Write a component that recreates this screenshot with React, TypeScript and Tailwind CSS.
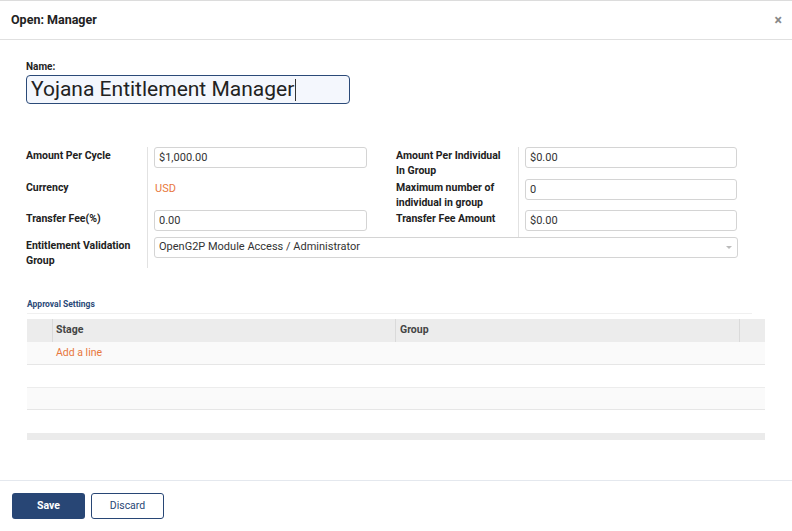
const font = { fontFamily: "Roboto, 'Liberation Sans', sans-serif" };

function TextBox({ value }: { value: string }) {
  return (
    <div className="h-[21px] w-full rounded-[3px] border border-[#d4d4d4] bg-white px-[4px] text-[11px] leading-[19px] text-[#333]">
      {value}
    </div>
  );
}

function Label({ children }: { children: React.ReactNode }) {
  return (
    <div className="pt-[1px] text-[10.5px] font-bold leading-[15px] text-[#222]">
      {children}
    </div>
  );
}

export default function App() {
  return (
    <div
      className="flex h-[531px] w-[792px] flex-col border-t border-[#dcdcdc] bg-white"
      style={font}
    >
      <div className="flex h-[39px] items-center justify-between border-b border-[#e0e0e0] pl-[11px] pr-[10px]">
        <span className="text-[12.5px] font-bold text-[#222]">Open: Manager</span>
        <span className="text-[14px] font-bold leading-none text-[#888]">×</span>
      </div>

      <div className="flex-1 px-[26px]">
        <div className="mt-[19px] text-[10px] font-bold text-[#222]">Name:</div>
        <div className="mt-[1px] flex h-[29px] w-[324px] items-center rounded-[4px] border border-[#2b4a78] bg-[#f4f7fd] pl-[4px] text-[21px] leading-none text-[#222]">
          Yojana Entitlement Manager
          <span className="ml-[1px] h-[22px] w-[1px] bg-[#333]" />
        </div>

        <div className="mt-[43px] grid grid-cols-[121px_220px_29px_122px_219px]">
          {/* row 1 */}
          <div className="h-[32px]">
            <Label>Amount Per Cycle</Label>
          </div>
          <div className="border-l border-[#e2e2e2] pl-[6px]">
            <TextBox value="$1,000.00" />
          </div>
          <div />
          <div>
            <Label>
              Amount Per Individual
              <br />
              In Group
            </Label>
          </div>
          <div className="border-l border-[#e2e2e2] pl-[6px]">
            <TextBox value="$0.00" />
          </div>

          {/* row 2 */}
          <div className="h-[31px]">
            <Label>Currency</Label>
          </div>
          <div className="border-l border-[#e2e2e2] pl-[7px] pt-[2px] text-[11px] text-[#e8773c]">
            USD
          </div>
          <div />
          <div>
            <Label>
              Maximum number of
              <br />
              individual in group
            </Label>
          </div>
          <div className="border-l border-[#e2e2e2] pl-[6px]">
            <TextBox value="0" />
          </div>

          {/* row 3 */}
          <div className="h-[27px]">
            <Label>Transfer Fee(%)</Label>
          </div>
          <div className="border-l border-[#e2e2e2] pl-[6px]">
            <TextBox value="0.00" />
          </div>
          <div />
          <div>
            <Label>Transfer Fee Amount</Label>
          </div>
          <div className="border-l border-[#e2e2e2] pl-[6px]">
            <TextBox value="$0.00" />
          </div>

          {/* row 4 */}
          <div className="h-[31px]">
            <Label>
              Entitlement Validation
              <br />
              Group
            </Label>
          </div>
          <div className="col-span-4 border-l border-[#e2e2e2] pl-[6px]">
            <div className="flex h-[21px] w-[584px] items-center justify-between rounded-[3px] border border-[#d4d4d4] bg-white px-[4px] text-[11px] text-[#333]">
              <span>OpenG2P Module Access / Administrator</span>
              <span className="mr-[1px] h-0 w-0 border-x-[3px] border-t-[3px] border-x-transparent border-t-[#bbb]" />
            </div>
          </div>
        </div>

        <div className="mt-[30px] ml-[1px] w-[725px] border-b border-[#f0f0f0] pb-[2px] text-[8.5px] font-bold text-[#2b4a78]">
          Approval Settings
        </div>

        <div className="mt-[5px] ml-[1px] w-[738px] text-[10.5px]">
          <div className="flex h-[23px] bg-[#ececec] font-bold text-[#444]">
            <div className="w-[26px] border-r border-[#dadada]" />
            <div className="flex w-[343px] items-center border-r border-[#dadada] pl-[3px]">
              Stage
            </div>
            <div className="flex w-[344px] items-center border-r border-[#dadada] pl-[4px]">
              Group
            </div>
          </div>
          <div className="flex h-[23px] items-center border-b border-[#e6e6e6] bg-[#fafafa] pl-[29px] text-[#e8773c]">
            Add a line
          </div>
          <div className="h-[23px] border-b border-[#ececec] bg-white" />
          <div className="h-[22px] border-b border-[#e6e6e6] bg-[#fafafa]" />
          <div className="h-[23px] bg-white" />
          <div className="h-[7px] bg-[#ebebeb]" />
        </div>
      </div>

      <div className="flex h-[51px] items-start gap-[6px] border-t border-[#e4e8ee] pl-[12px] pt-[12px]">
        <button className="h-[26px] w-[73px] rounded-[3px] bg-[#284675] text-[10.5px] font-bold text-white">
          Save
        </button>
        <button className="h-[26px] w-[73px] rounded-[3px] border border-[#284675] bg-white text-[10.5px] text-[#284675]">
          Discard
        </button>
      </div>
    </div>
  );
}
